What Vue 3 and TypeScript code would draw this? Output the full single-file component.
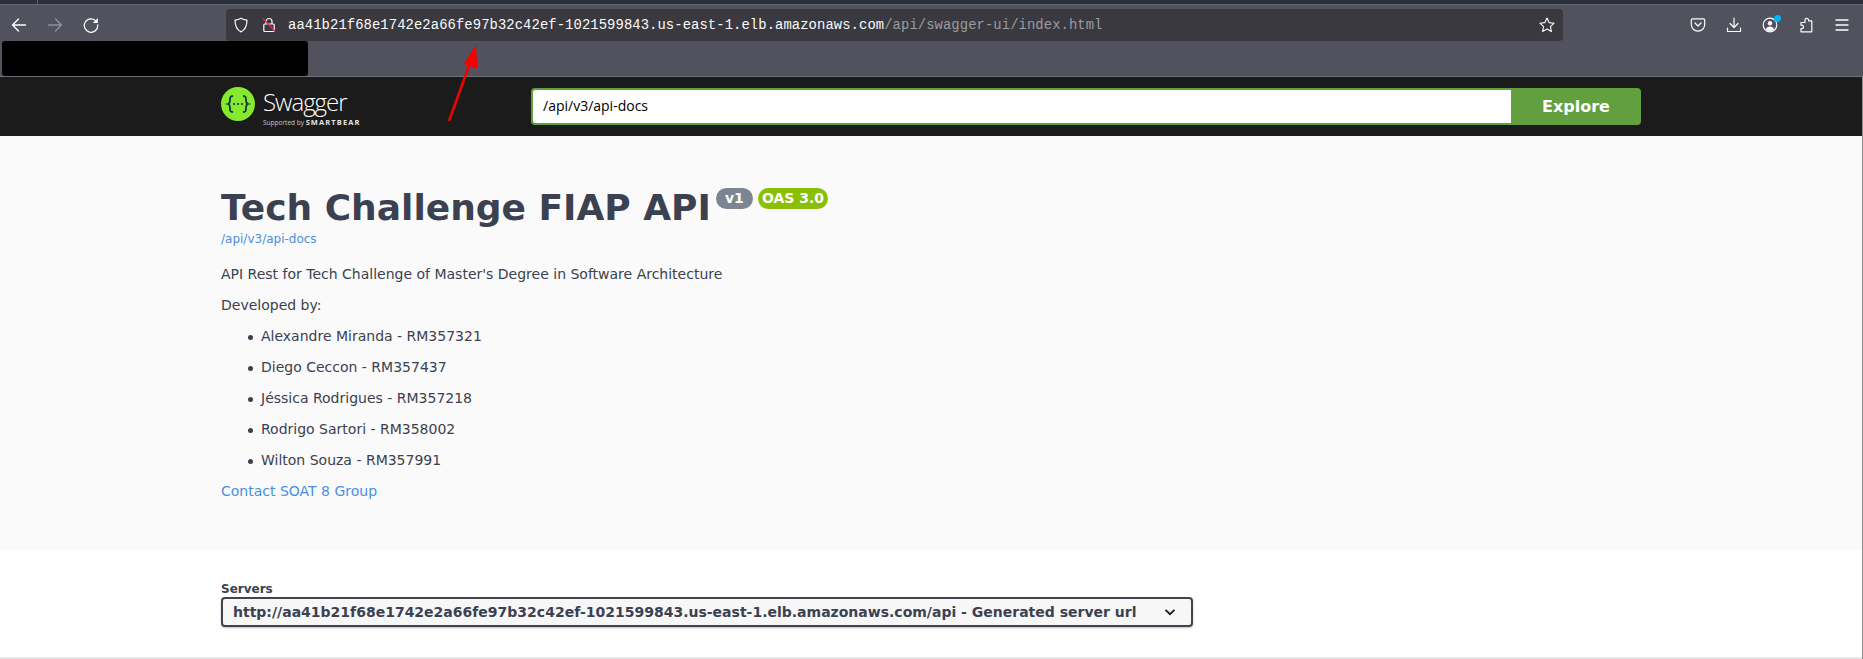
<script setup lang="ts">
const members = [
  'Alexandre Miranda - RM357321',
  'Diego Ceccon - RM357437',
  'Jéssica Rodrigues - RM357218',
  'Rodrigo Sartori - RM358002',
  'Wilton Souza - RM357991'
]
</script>

<template>
  <div class="page">
    <div class="tabstrip"><i class="tab-divider"></i></div>
    <div class="toolbar">
      <div class="nav-row">
        <div class="nav-btns">
          <span class="tool">
            <svg width="16" height="16" viewBox="0 0 16 16" fill="none" stroke="#fbfbfe" stroke-width="1.4" stroke-linecap="round" stroke-linejoin="round"><path d="M14.5 8H1.5M7.5 2L1.5 8l6 6" /></svg>
          </span>
          <span class="tool">
            <svg width="16" height="16" viewBox="0 0 16 16" fill="none" stroke="#8f8f98" stroke-width="1.4" stroke-linecap="round" stroke-linejoin="round"><path d="M1.5 8h13M8.500 2l6 6-6 6" /></svg>
          </span>
          <span class="tool">
            <svg width="16" height="16" viewBox="0 0 16 16" fill="none" stroke="#fbfbfe" stroke-width="1.3" stroke-linecap="round"><path d="M13.2 4.300A6.700 6.700 0 1 0 14.700 8" /><path d="M14.800 1v5h-5z" fill="#fbfbfe" stroke="none" /></svg>
          </span>
        </div>
        <div class="urlbar">
          <svg class="shield" width="16" height="16" viewBox="0 0 16 16" fill="none" stroke="#fbfbfe" stroke-width="1.200" stroke-linejoin="round"><path d="M8 1.200c1.800 1.200 3.800 1.700 6 1.900 0 6-1.800 9.800-6 11.800-4.200-2-6-5.800-6-11.800 2.200-.2 4.200-.7 6-1.900z" /></svg>
          <svg class="lock" width="16" height="16" viewBox="0 0 16 16" fill="none" stroke="#fbfbfe" stroke-width="1.200"><path d="M5 7V4.500a3 3 0 0 1 6 0V7" /><rect x="2.800" y="7" width="10.400" height="7.500" rx="1" /><path d="M2 1.500l12 13" stroke="#e22850" stroke-width="1.300" /></svg>
          <span class="url">aa41b21f68e1742e2a66fe97b32c42ef-1021599843.us-east-1.elb.amazonaws.com<span class="url-path">/api/swagger-ui/index.html</span></span>
          <svg class="star" width="16" height="16" viewBox="0 0 16 16" fill="none" stroke="#fbfbfe" stroke-width="1.100" stroke-linejoin="round"><path d="M8 1l2.100 4.600 5 .6-3.700 3.400 1 5L8 12.100l-4.400 2.500 1-5L.9 6.200l5-.6z" /></svg>
        </div>
        <div class="right-btns">
          <span class="tool">
            <svg width="16" height="16" viewBox="0 0 16 16" fill="none" stroke="#fbfbfe" stroke-width="1.200" stroke-linecap="round" stroke-linejoin="round"><path d="M2.500 1.800h11c.7 0 1.200.5 1.200 1.200v4.500c0 3.700-3 6.700-6.700 6.700s-6.700-3-6.700-6.700V3c0-.7.500-1.200 1.200-1.200z" /><path d="M5 6l3 3 3-3" /></svg>
          </span>
          <span class="tool">
            <svg width="16" height="16" viewBox="0 0 16 16" fill="none" stroke="#fbfbfe" stroke-width="1.200" stroke-linecap="round" stroke-linejoin="round"><path d="M8 1v9.500M4 6.500l4 4 4-4M1.500 11v3.500h13V11" /></svg>
          </span>
          <span class="tool">
            <svg width="16" height="16" viewBox="0 0 16 16" fill="none" stroke="#fbfbfe" stroke-width="1.200"><circle cx="8" cy="8" r="6.800" /><circle cx="8" cy="6.300" r="2.200" fill="#fbfbfe" stroke="none" /><path d="M3.800 12.500c.5-2 2.200-3 4.200-3s3.700 1 4.200 3A6 6 0 0 1 8 14a6 6 0 0 1-4.200-1.500z" fill="#fbfbfe" stroke="none" /></svg>
            <i class="dot"></i>
          </span>
          <span class="tool">
            <svg width="16" height="16" viewBox="0 0 16 16" fill="none" stroke="#fbfbfe" stroke-width="1.200" stroke-linejoin="round"><path d="M7 3.500V2.800a1.800 1.800 0 0 1 3.600 0v.700h3.200v11H3v-3.200h.8a1.700 1.700 0 0 0 0-3.400H3V5.200h4z" transform="translate(0 .3)" /></svg>
          </span>
          <span class="tool">
            <svg width="16" height="16" viewBox="0 0 16 16" fill="none" stroke="#fbfbfe" stroke-width="1.300" stroke-linecap="round"><path d="M2 3h12M2 8h12M2 13h12" /></svg>
          </span>
        </div>
      </div>
      <div class="bookmarks">
        <div class="redacted"></div>
      </div>
    </div>

    <header class="topbar">
      <div class="wrapper topbar-inner">
        <div class="logo">
          <svg class="logo-mark" width="34" height="34" viewBox="0 0 34 34">
            <circle cx="17" cy="17" r="17" fill="#85ea2d" />
            <path d="M12 9c-3 0-3 1.500-3 4s-.3 3.500-2 4c1.700.5 2 1.500 2 4s0 4 3 4M22 9c3 0 3 1.500 3 4s.3 3.500 2 4c-1.700.5-2 1.500-2 4s0 4-3 4" fill="none" stroke="#173647" stroke-width="1.800" />
            <circle cx="13" cy="17" r="1.100" fill="#173647" /><circle cx="17" cy="17" r="1.100" fill="#173647" /><circle cx="21" cy="17" r="1.100" fill="#173647" />
          </svg>
          <div class="logo-text">
            <span class="logo-name">Swagger</span>
            <span class="logo-sub">Supported by <b>SMARTBEAR</b></span>
          </div>
        </div>
        <form class="search" @submit.prevent>
          <input class="search-input" type="text" value="/api/v3/api-docs" />
          <button class="search-btn" type="submit">Explore</button>
        </form>
      </div>
    </header>

    <section class="info">
      <div class="wrapper">
        <div class="title-row">
          <h2 class="title">Tech Challenge FIAP API</h2>
          <span class="badge badge-version">v1</span>
          <span class="badge badge-oas">OAS 3.0</span>
        </div>
        <a class="spec-link">/api/v3/api-docs</a>
        <p class="para first">API Rest for Tech Challenge of Master's Degree in Software Architecture</p>
        <p class="para">Developed by:</p>
        <ul class="members">
          <li v-for="name in members" :key="name">{{ name }}</li>
        </ul>
        <a class="contact">Contact SOAT 8 Group</a>
      </div>
    </section>

    <section class="servers">
      <div class="wrapper">
        <div class="servers-title">Servers</div>
        <div class="server-select">
          <span>http://aa41b21f68e1742e2a66fe97b32c42ef-1021599843.us-east-1.elb.amazonaws.com/api - Generated server url</span>
          <svg width="12" height="12" viewBox="0 0 12 12" fill="none" stroke="#1b1b1b" stroke-width="1.800"><path d="M1.500 3.800L6 8.200l4.500-4.400" /></svg>
        </div>
      </div>
    </section>

    <i class="scroll-edge"></i>

    <svg class="annotation" width="60" height="90" viewBox="0 0 60 90">
      <path d="M6 84L27 26" stroke="#f50000" stroke-width="2.500" />
      <path d="M33 8l1.500 24-14-5z" fill="#f50000" />
    </svg>
  </div>
</template>

<style scoped>
.page {
  position: relative;
  width: 1863px;
  height: 659px;
  overflow: hidden;
  background: #fff;
  font-family: "DejaVu Sans", sans-serif;
  color: #3b4151;
}

.tabstrip {
  height: 4px;
  padding-left: 37px;
  background: #2b2e3b;
}

.tab-divider {
  display: block;
  width: 1px;
  height: 4px;
  background: #5d5f6b;
}

.toolbar {
  background: #52525e;
  border-top: 1px solid #666670;
  border-bottom: 1px solid #6f6f79;
}

.nav-row {
  display: flex;
  align-items: center;
  height: 36px;
  padding: 4px 3px 0 1px;
  box-sizing: border-box;
}

.nav-btns,
.right-btns {
  display: flex;
}

.right-btns {
  margin-left: auto;
}

.tool {
  position: relative;
  display: flex;
  align-items: center;
  justify-content: center;
  width: 36px;
  height: 32px;
}

.dot {
  position: absolute;
  top: 6px;
  right: 7px;
  width: 7px;
  height: 7px;
  border-radius: 50%;
  background: #00b3f4;
}

.urlbar {
  display: flex;
  align-items: center;
  flex: none;
  width: 1337px;
  height: 32px;
  margin-left: 117px;
  padding: 0 8px 0 7px;
  box-sizing: border-box;
  background: #3a393f;
  border-radius: 4px;
}

.shield {
  flex: none;
}

.lock {
  flex: none;
  margin-left: 12px;
}

.url {
  margin-left: 11px;
  font-family: "Liberation Mono", monospace;
  font-size: 13.87px;
  letter-spacing: 0.08px;
  color: #fbfbfe;
  white-space: nowrap;
}

.url-path {
  color: #9b9ba1;
}

.star {
  margin-left: auto;
}

.bookmarks {
  height: 35px;
}

.redacted {
  width: 306px;
  height: 35px;
  margin-left: 2px;
  background: #000;
  border-radius: 3px;
}

.topbar {
  height: 59px;
  background: #1b1b1b;
}

.wrapper {
  width: 1420px;
  margin-left: 221px;
}

.topbar-inner {
  display: flex;
  align-items: center;
  height: 100%;
}

.logo {
  display: flex;
  align-items: center;
  width: 310px;
  gap: 8px;
  color: #fff;
}

.logo-mark {
  margin-top: -5px;
}

.logo-text {
  display: flex;
  flex-direction: column;
  gap: 3px;
  margin-top: 2px;
}

.logo-name {
  font-family: "Open Sans", sans-serif;
  font-weight: 300;
  font-size: 24px;
  line-height: 26px;
  letter-spacing: -1px;
}

.logo-sub {
  font-family: "Open Sans", sans-serif;
  font-size: 6.500px;
  line-height: 9px;
  color: #c8c8c8;
  white-space: nowrap;
}

.logo-sub b {
  font-size: 7.500px;
  letter-spacing: 1.100px;
  color: #e4e4e4;
}

.search {
  display: flex;
  flex: 1;
  height: 37px;
  margin-top: -1px;
}

.search-input {
  flex: 1;
  min-width: 0;
  padding: 0 10px 2px;
  box-sizing: border-box;
  border: 2px solid #62a03f;
  border-right: none;
  border-radius: 4px 0 0 4px;
  outline: none;
  background: #fff;
  font-family: "Open Sans", sans-serif;
  font-size: 14px;
  color: #000;
}

.search-btn {
  width: 130px;
  padding: 0;
  border: none;
  border-radius: 0 4px 4px 0;
  background: #62a03f;
  font-family: "DejaVu Sans", sans-serif;
  font-size: 16px;
  font-weight: 700;
  color: #fff;
}

.info {
  height: 414px;
  box-sizing: border-box;
  padding-top: 50px;
  background: #fafafa;
}

.title-row {
  display: flex;
  align-items: flex-start;
  height: 46px;
}

.title {
  margin: 0;
  font-size: 36px;
  line-height: 44px;
  font-weight: 700;
  color: #3b4151;
}

.badge {
  height: 21px;
  margin-top: 2px;
  border-radius: 11px;
  font-size: 14px;
  font-weight: 700;
  line-height: 21px;
  color: #fff;
}

.badge-version {
  width: 37px;
  margin-left: 5px;
  text-align: center;
  background: #7d8492;
}

.badge-oas {
  margin-left: 5px;
  padding: 0 4px;
  background: #89bf04;
}

.spec-link {
  display: block;
  font-size: 12px;
  line-height: 14px;
  color: #4990e2;
}

.para {
  margin: 14px 0 0;
  font-size: 14px;
  line-height: 17px;
}

.para.first {
  margin-top: 20px;
}

.members {
  margin: 14px 0 0;
  padding: 0 0 0 40px;
  list-style: none;
  font-size: 14px;
  line-height: 17px;
}

.members li {
  position: relative;
  margin-bottom: 14px;
}

.members li::before {
  content: "";
  position: absolute;
  top: 7px;
  left: -13px;
  width: 5px;
  height: 5px;
  border-radius: 50%;
  background: #3b4151;
}

.contact {
  display: block;
  font-size: 14px;
  line-height: 17px;
  color: #4990e2;
}

.servers {
  height: 109px;
  box-sizing: border-box;
  padding-top: 32px;
  border-bottom: 2px solid #e6e6e6;
}

.servers-title {
  font-size: 12px;
  line-height: 14px;
  font-weight: 700;
  color: #3b4151;
}

.server-select {
  display: flex;
  align-items: center;
  justify-content: space-between;
  width: 972px;
  height: 30px;
  margin-top: 1px;
  padding: 0 15px 0 10px;
  box-sizing: border-box;
  border: 2px solid #41444e;
  border-radius: 4px;
  background: #f7f7f7;
  box-shadow: 0 1px 2px rgba(0, 0, 0, 0.25);
  font-size: 14px;
  font-weight: 700;
  color: #3b4151;
  white-space: nowrap;
}

.scroll-edge {
  position: absolute;
  top: 77px;
  right: 0;
  bottom: 0;
  width: 1px;
  background: #8e8e8e;
}

.annotation {
  position: absolute;
  left: 443px;
  top: 37px;
}
</style>

<style>
html, body {
  margin: 0;
}
</style>
